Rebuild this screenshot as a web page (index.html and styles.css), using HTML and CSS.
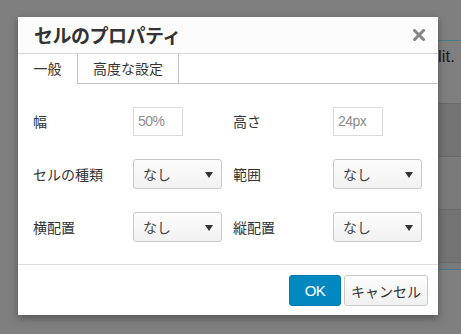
FILE: index.html
```html
<!DOCTYPE html>
<html lang="ja">
<head>
    <meta charset="UTF-8">
    <title>セルのプロパティ</title>
    <link rel="stylesheet" href="styles.css">
</head>
<body>
    <div class="page">
        <div class="page-top"></div>
        <div class="page-text">elit.</div>
        <div class="page-row"></div>
        <div class="page-row alt"></div>
        <div class="page-row"></div>
        <div class="page-end"></div>
    </div>

    <div class="dialog">
        <div class="dialog-head">
            <span class="dialog-title">セルのプロパティ</span>
            <svg class="close" width="12" height="12" viewBox="0 0 12 12">
                <path d="M1.5 1.5 L10.5 10.5 M10.5 1.5 L1.5 10.5" stroke="#858585" stroke-width="3" stroke-linecap="square"/>
            </svg>
        </div>
        <div class="tabs">
            <div class="tab active">一般</div>
            <div class="tab">高度な設定</div>
            <div class="tab-fill"></div>
        </div>
        <div class="dialog-body">
            <label class="field-label">幅</label>
            <div class="text-input">50%</div>
            <label class="field-label">高さ</label>
            <div class="text-input">24px</div>

            <label class="field-label">セルの種類</label>
            <div class="select"><span>なし</span><i class="caret"></i></div>
            <label class="field-label">範囲</label>
            <div class="select"><span>なし</span><i class="caret"></i></div>

            <label class="field-label">横配置</label>
            <div class="select"><span>なし</span><i class="caret"></i></div>
            <label class="field-label">縦配置</label>
            <div class="select"><span>なし</span><i class="caret"></i></div>
        </div>
        <div class="dialog-foot">
            <button class="btn primary">OK</button>
            <button class="btn">キャンセル</button>
        </div>
    </div>
</body>
</html>
```

FILE: styles.css
```css
body {
    margin: 0;
    padding: 0;
    height: 334px;
    overflow: hidden;
    background: #7f7f7f;
    font-family: "Liberation Sans", "Noto Sans CJK JP", sans-serif;
    font-size: 14px;
    line-height: 1.2;
    color: #333;
}
.page {
    margin-left: 30px;
}
.page-top {
    height: 40px;
    border-bottom: 1px solid #467b89;
}
.page-text {
    height: 62px;
    padding-top: 6px;
    box-sizing: border-box;
    text-align: right;
    font-size: 17px;
    color: #1f1a14;
    white-space: nowrap;
    overflow: hidden;
    padding-right: 6px;
}
.page-row {
    height: 52px;
    background: #737373;
    border-top: 1px solid #6a6a6a;
}
.page-row.alt {
    background: #7a7a7a;
}
.page-end {
    height: 6px;
    background: #7a7a7a;
    border-top: 1px solid #6a6a6a;
    border-bottom: 1px solid #467b89;
}
.dialog {
    position: absolute;
    left: 18px;
    top: 17px;
    width: 420px;
    background: #fff;
    box-shadow: 0 3px 8px rgba(0, 0, 0, 0.35);
}
.dialog-head {
    height: 36px;
    background: #fcfcfc;
    border-bottom: 1px solid #d6d6d6;
    display: flex;
    align-items: center;
    justify-content: space-between;
    padding: 0 13px 0 16px;
}
.dialog-title {
    font-family: "Noto Sans CJK JP", sans-serif;
    font-size: 19px;
    font-weight: 700;
    line-height: 1.1;
    color: #333;
    letter-spacing: -0.5px;
}
.close {
    margin-top: -1px;
}
.tabs {
    display: flex;
    height: 30px;
}
.tab {
    display: flex;
    align-items: center;
    justify-content: center;
    white-space: nowrap;
    padding: 0 15px;
    border-bottom: 1px solid #c5c5c5;
    color: #333;
    font-family: "Noto Sans CJK JP", sans-serif;
    font-size: 14px;
}
.tab + .tab {
    border-left: 1px solid #c5c5c5;
    border-right: 1px solid #c5c5c5;
    padding: 0 15px;
}
.tab.active {
    border-bottom-color: transparent;
    width: 59px;
    padding: 0;
    box-sizing: border-box;
}
.tab-fill {
    flex: 1;
    border-bottom: 1px solid #c5c5c5;
}
.dialog-body {
    display: grid;
    grid-template-columns: 100px 100px 100px 1fr;
    grid-auto-rows: 30px;
    row-gap: 23px;
    align-items: center;
    padding: 22px 15px 22px 15px;
    border-bottom: 1px solid #dcdcdc;
}
.field-label {
    font-family: "Noto Sans CJK JP", sans-serif;
    font-size: 14px;
    color: #333;
}
.text-input {
    width: 50px;
    height: 29px;
    box-sizing: border-box;
    border: 1px solid #dadada;
    padding-left: 4px;
    line-height: 27px;
    color: #8c8c8c;
    font-size: 14px;
    letter-spacing: -0.5px;
}
.select {
    width: 89px;
    height: 30px;
    box-sizing: border-box;
    border: 1px solid #c9c9c9;
    border-radius: 3px;
    background: linear-gradient(#fdfdfd, #f1f1f1);
    display: flex;
    align-items: center;
    justify-content: space-between;
    padding: 0 8px 0 9px;
    color: #444;
    font-family: "Noto Sans CJK JP", sans-serif;
}
.caret {
    width: 0;
    height: 0;
    border-left: 4px solid transparent;
    border-right: 4px solid transparent;
    border-top: 6px solid #333;
    margin-top: 2px;
}
.dialog-foot {
    display: flex;
    justify-content: flex-end;
    gap: 3px;
    padding: 10px 10px 9px;
}
.btn {
    height: 31px;
    padding: 0 5px;
    border: 1px solid #c9c9c9;
    border-radius: 3px;
    background: linear-gradient(#fdfdfd, #f0f0f0);
    color: #333;
    font-family: "Noto Sans CJK JP", sans-serif;
    font-size: 14px;
    width: 84px;
}
.btn.primary {
    width: 52px;
    background: #0088c0;
    border-color: #0079ad;
    color: #fff;
    font-family: "Liberation Sans", sans-serif;
    font-size: 15px;
    letter-spacing: -0.5px;
}
```
